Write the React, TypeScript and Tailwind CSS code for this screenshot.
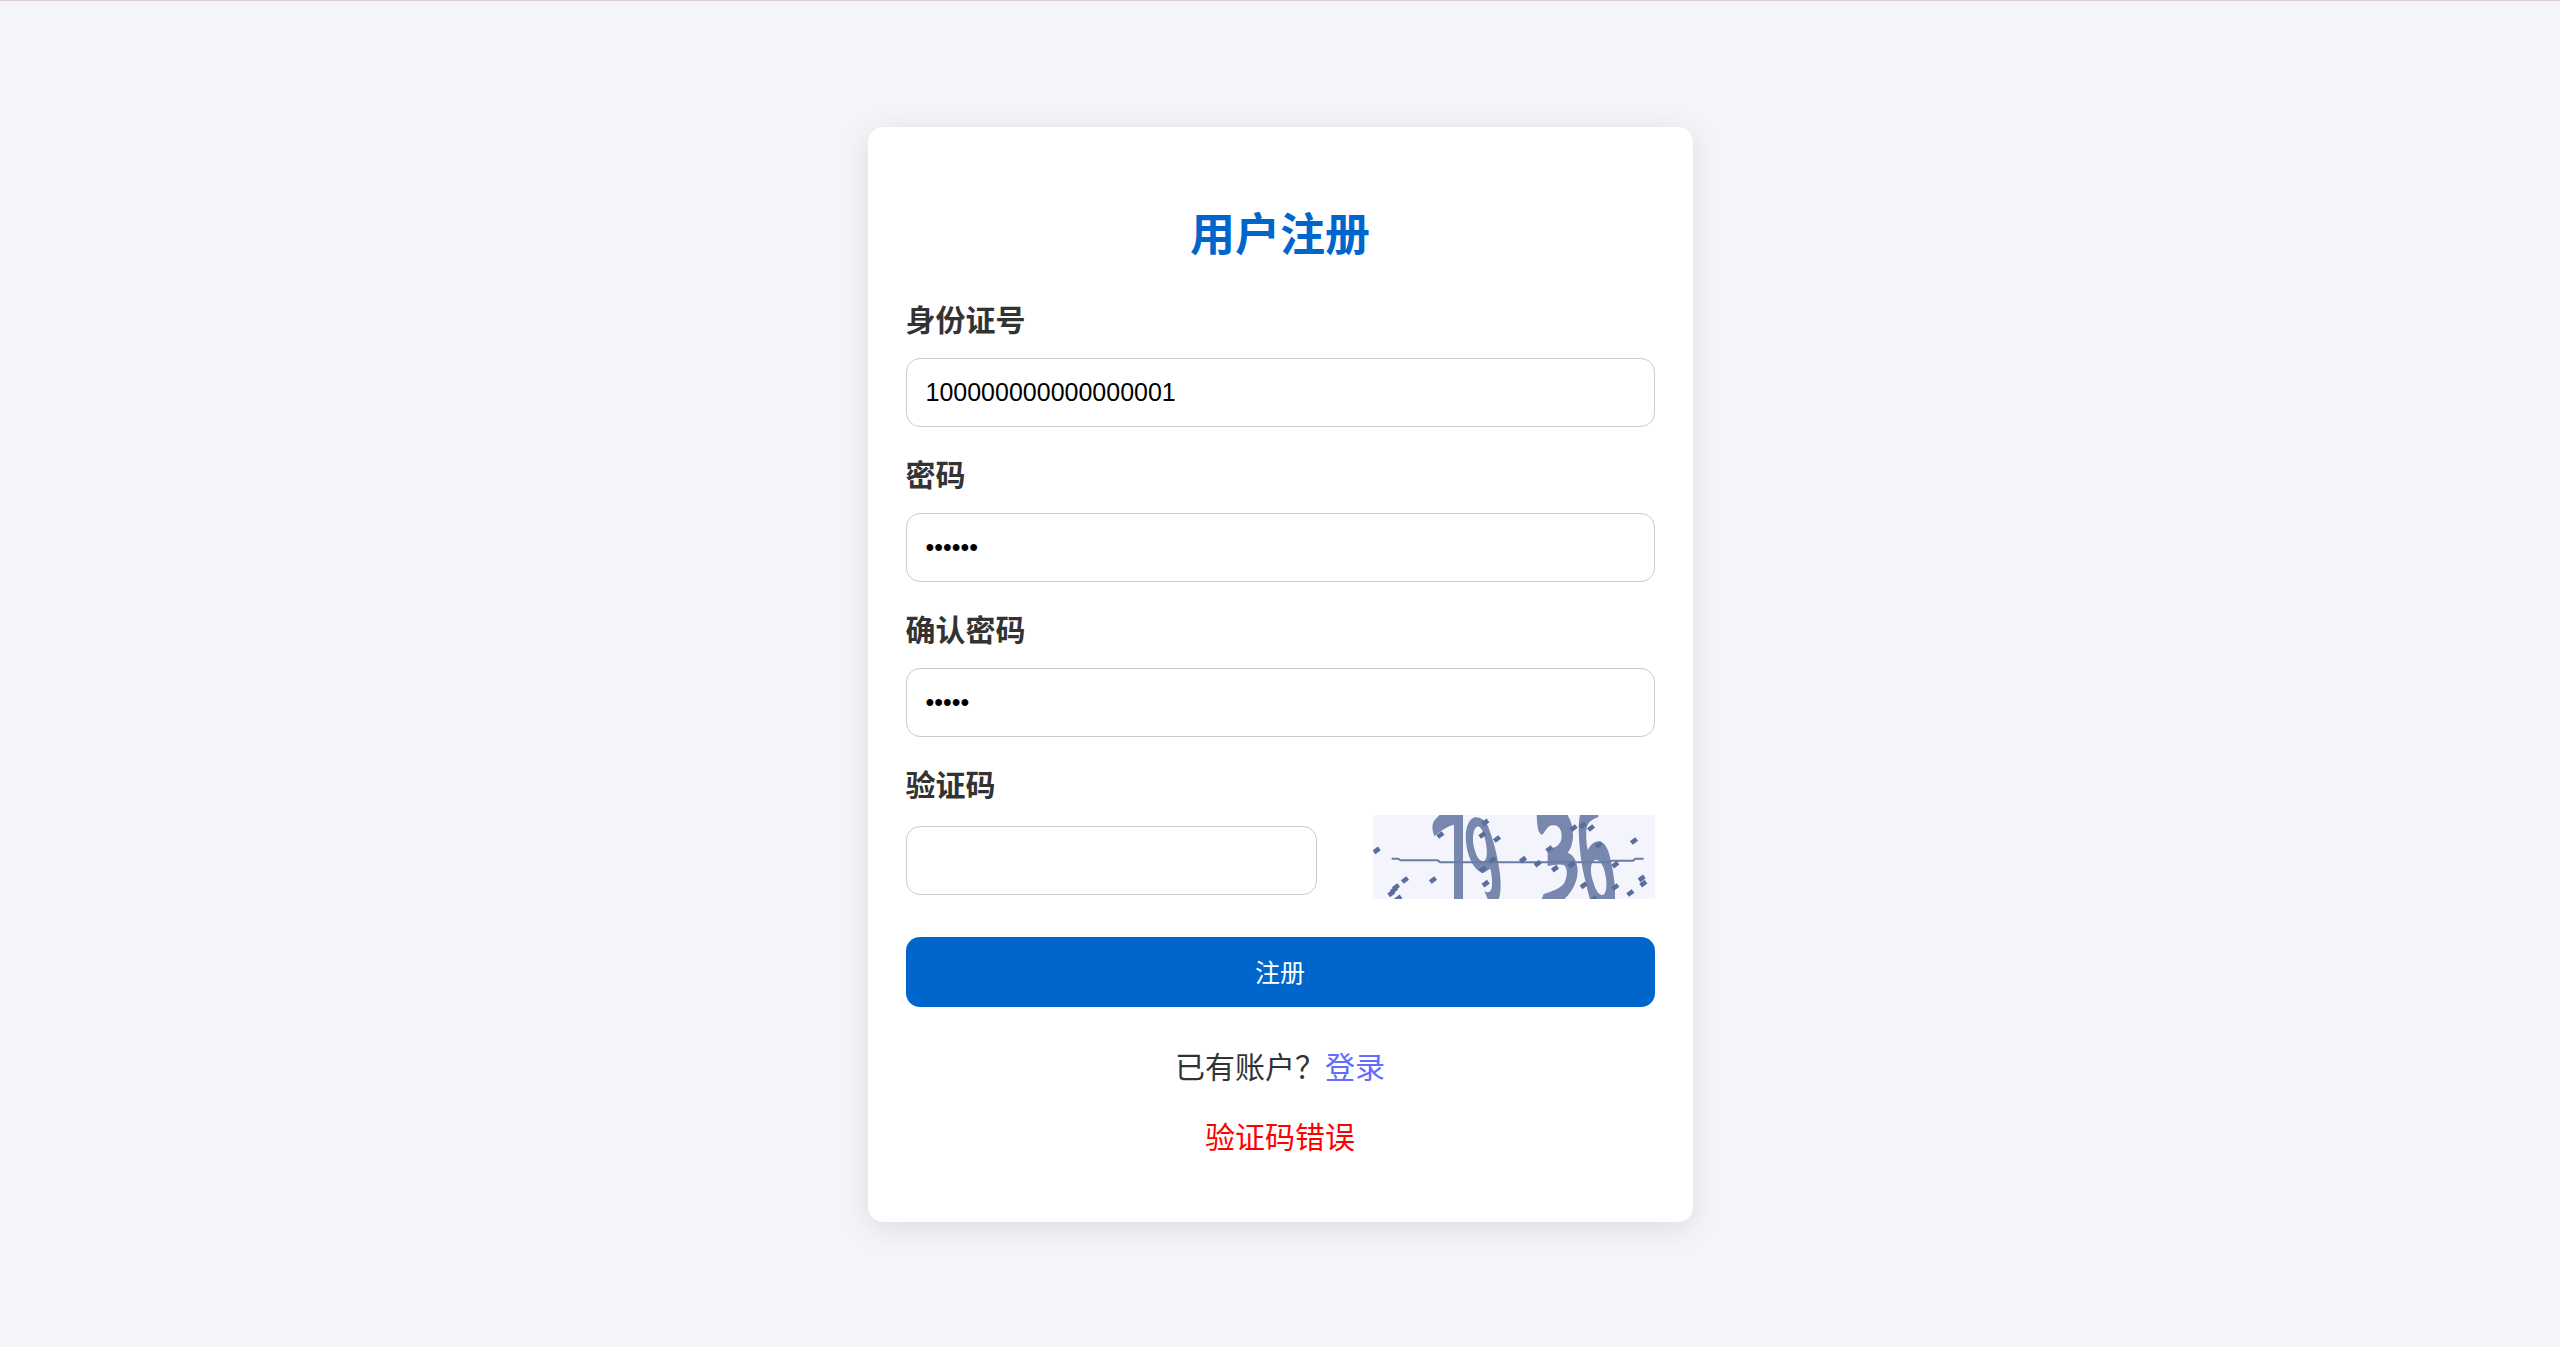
import type { InputHTMLAttributes } from "react";

const INPUT =
  "h-[69px] w-full rounded-[14px] border border-[#cccccc] bg-white px-[19px] font-['Liberation_Sans','Noto_Sans_CJK_SC',sans-serif] text-[25px] text-black outline-none";

const LABEL = "mb-3 block text-[30px] leading-10 font-bold text-[#333333]";

type FieldProps = InputHTMLAttributes<HTMLInputElement> & { id: string; label: string };

function Field({ id, label, ...rest }: FieldProps) {
  return (
    <div>
      <label htmlFor={id} className={LABEL}>
        {label}
      </label>
      <div className="pt-2">
        <input id={id} name={id} className={INPUT} {...rest} />
      </div>
    </div>
  );
}

const SPECKS = [
  [53, 151], [138, 240], [222, 240], [244, 105], [379, 67], [370, 105], [414, 117], [401, 180],
  [372, 208], [380, 251], [492, 179], [536, 191], [571, 147], [588, 206], [644, 84], [671, 76],
  [696, 84], [719, 135], [769, 194], [769, 261], [674, 256], [704, 297], [638, 194], [825, 123],
  [848, 235], [853, 251], [814, 279], [118, 295], [97, 280], [105, 270], [111, 261],
];

function Captcha() {
  return (
    <svg
      viewBox="42 45 846 252"
      role="img"
      aria-label="验证码图片"
      className="h-[84px] w-[282px] shrink-0 bg-[#f4f5fc]"
    >
      <defs>
        <filter id="soften" x="-5%" y="-5%" width="110%" height="110%">
          <feGaussianBlur stdDeviation="2" />
        </filter>
      </defs>
      <g filter="url(#soften)">
        <g fill="#7787ad" fillRule="evenodd">
          <path d="M246 40H312V302H285V74C268 78 252 88 240 98L226 108C218 88 218 68 230 57Z" />
          <path d="M346 52C366 50 382 62 390 86C404 124 415 166 421 208C427 250 426 280 418 302H388L376 272C388 282 398 276 399 256C400 238 398 222 394 206L373 219C354 214 338 196 328 162C316 118 316 66 346 52ZM354 80C342 86 340 112 344 138C350 166 360 184 374 184C384 180 386 158 380 126C374 96 366 76 354 80Z" />
          <path d="M533 40H622C636 58 644 88 642 112C640 134 634 150 626 158C646 166 656 188 656 214C655 250 636 282 610 302H546L554 282C586 272 608 262 616 248C626 230 626 206 616 196C602 190 584 196 566 198V162C566 150 576 144 588 142C604 134 612 118 606 94C600 76 584 72 568 80L550 104C536 104 534 74 533 40Z" />
          <path d="M664 40H718V52C696 58 684 70 682 90C681 112 682 136 687 150C694 134 706 124 722 124C738 128 748 148 754 176C764 216 770 262 768 302H694C682 256 668 206 663 150C659 112 657 68 664 40ZM704 182C692 194 694 222 704 250C712 276 722 288 733 284C746 276 744 242 736 210C728 186 716 174 704 182Z" />
        </g>
        <path
          d="M98 176H118L124 181H236L244 187H748L760 182H822L830 176H854"
          fill="none"
          stroke="#6b7ba6"
          strokeWidth="6"
          strokeLinejoin="round"
        />
        <g stroke="#5a6d9c" strokeWidth="14">
          {SPECKS.map(([x, y]) => (
            <path key={`${x}-${y}`} d={`M${x - 8} ${y + 6}L${x + 8} ${y - 6}`} />
          ))}
        </g>
      </g>
    </svg>
  );
}

export default function App() {
  return (
    <main className="flex min-h-screen items-center justify-center border-t border-[#dccbd0] bg-[#f4f4f9] font-['Noto_Sans_CJK_SC',sans-serif] text-[#333333]">
      <section className="w-full max-w-[825px] rounded-[15px] bg-white px-[38px] pt-[75px] pb-[67px] shadow-[0_6px_30px_rgba(0,0,0,0.1)]">
        <h1 className="mb-9 text-center text-[45px] leading-[60px] font-bold text-[#0066cc]">用户注册</h1>
        <form className="flex flex-col" onSubmit={(e) => e.preventDefault()}>
          <div className="flex flex-col gap-[26px]">
            <Field id="idNumber" label="身份证号" type="text" defaultValue="100000000000000001" />
            <Field id="password" label="密码" type="password" defaultValue="123456" />
            <Field id="confirmPassword" label="确认密码" type="password" defaultValue="12345" />
            <div>
              <label htmlFor="captcha" className={LABEL}>
                验证码
              </label>
              <div className="flex items-center justify-between">
                <div className="w-[55%] pt-2">
                  <input id="captcha" name="captcha" type="text" className={INPUT} />
                </div>
                <Captcha />
              </div>
            </div>
          </div>
          <button
            type="submit"
            className="mt-[38px] h-[70px] w-full rounded-[14px] bg-[#0066cc] text-[25px] text-white"
          >
            注册
          </button>
        </form>
        <p className="mt-[38px] text-center text-[30px] leading-10">
          已有账户？
          <a href="#login" className="text-[#646cff]">
            登录
          </a>
        </p>
        <p role="alert" className="mt-[30px] text-center text-[30px] leading-10 text-[#ff0000]">
          验证码错误
        </p>
      </section>
    </main>
  );
}
